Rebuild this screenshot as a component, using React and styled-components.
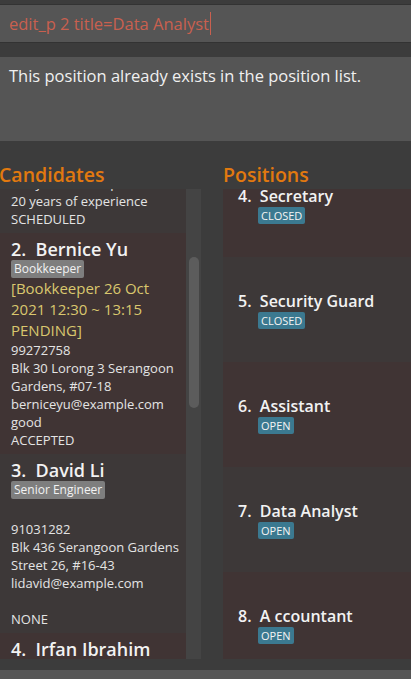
import React, { useLayoutEffect, useRef } from 'react';
import styled, { createGlobalStyle } from 'styled-components';

const GlobalStyle = createGlobalStyle`
  html, body {
    margin: 0;
    padding: 0;
    background: #3c3c3c;
    overflow: hidden;
  }
  body {
    font-family: "Open Sans", "Noto Sans", sans-serif;
  }
`;

const Page = styled.div`
  display: flex;
  flex-direction: column;
  height: 679px;
  overflow: hidden;
`;

const TopStrip = styled.div`
  height: 4px;
  flex-shrink: 0;
`;

const CommandBox = styled.div`
  height: 37px;
  flex-shrink: 0;
  display: flex;
  align-items: center;
  padding-left: 9px;
  background: #555555;
  border-top: 1px solid #333333;
  border-bottom: 1px solid #333333;
`;

const CommandText = styled.span`
  font-size: 16.5px;
  color: #c9604f;
  white-space: pre;
`;

const Caret = styled.span`
  width: 1px;
  height: 23px;
  margin-left: 1px;
  background: #c9604f;
`;

const ResultBox = styled.div`
  height: 84px;
  flex-shrink: 0;
  box-sizing: border-box;
  margin-top: 14px;
  padding: 8px 9px 0;
  background: #555555;
  color: #f0f0f0;
  font-size: 16.5px;
  line-height: 22px;
`;

const Panels = styled.div`
  display: flex;
  gap: 22px;
  height: 518px;
  flex-shrink: 0;
`;

const Column = styled.div`
  display: flex;
  flex-direction: column;
  width: ${(p) => (p.$width ? `${p.$width}px` : 'auto')};
  flex: ${(p) => (p.$width ? '0 0 auto' : '1')};
  min-width: 0;
`;

const Heading = styled.div`
  padding-top: 20px;
  height: 28px;
  margin-left: ${(p) => p.$shift || 0}px;
  font-size: 19.5px;
  line-height: 27px;
  font-weight: 600;
  color: #e2790f;
`;

const ListRow = styled.div`
  display: flex;
  height: 470px;
`;

const ListViewport = styled.div`
  flex: 1;
  height: 470px;
  overflow: hidden;
`;

const ScrollTrack = styled.div`
  width: 15px;
  background: #444444;
  padding-top: 68px;
  box-sizing: border-box;
`;

const ScrollThumb = styled.div`
  width: 10px;
  height: 151px;
  margin-left: 3px;
  border-radius: 5px;
  background: #5c5c5c;
`;

const CandidateCard = styled.div`
  padding: 5px 5px 5px 11px;
  background: ${(p) => (p.$alt ? '#403434' : '#3d3838')};
`;

const NameLine = styled.div`
  font-size: ${(p) => p.$size || 16}px;
  line-height: 22px;
  font-weight: 600;
  color: #f2f2f2;
  white-space: pre;
`;

const TagRow = styled.div`
  display: flex;
  gap: 4px;
  height: 18px;
`;

const Tag = styled.span`
  display: inline-block;
  height: 18px;
  padding: 0 3px;
  border-radius: 2px;
  background: #7e7e7e;
  color: #f2f2f2;
  font-size: 12px;
  line-height: 18px;
`;

const Interview = styled.div`
  min-height: 21px;
  font-size: 15px;
  line-height: 21px;
  color: #d9c76e;
`;

const Detail = styled.div`
  min-height: 18px;
  font-size: 13px;
  line-height: 18px;
  color: #e4e4e4;
`;

const PositionCard = styled.div`
  height: 105px;
  box-sizing: border-box;
  padding-left: 15px;
  display: flex;
  flex-direction: column;
  justify-content: center;
  background: ${(p) => (p.$alt ? '#403434' : '#3d3838')};
`;

const BadgeRow = styled.div`
  display: flex;
  margin-left: 20px;
  height: 17px;
`;

const Badge = styled.span`
  height: 17px;
  padding: 0 3px;
  border-radius: 2px;
  background: #3b7990;
  color: #f4f4f4;
  font-size: 11px;
  line-height: 17px;
`;

const StatusBar = styled.div`
  margin-top: 11px;
  height: 20px;
  flex-shrink: 0;
  background: #555555;
`;

const candidates = [
  {
    name: 'Alex Yeoh',
    tags: ['Software Engineer'],
    interview: '[Accountant 25 Oct 2021 10:00 ~ 10:45 SCHEDULED]',
    phone: '87438807',
    address: 'Blk 30 Geylang Street 29, #06-40',
    email: 'alexyeoh@example.com',
    remark: '20 years of experience',
    status: 'SCHEDULED',
  },
  {
    name: 'Bernice Yu',
    tags: ['Bookkeeper'],
    interview: '[Bookkeeper 26 Oct 2021 12:30 ~ 13:15 PENDING]',
    phone: '99272758',
    address: 'Blk 30 Lorong 3 Serangoon Gardens, #07-18',
    email: 'berniceyu@example.com',
    remark: 'good',
    status: 'ACCEPTED',
  },
  {
    name: 'David Li',
    tags: ['Senior Engineer'],
    interview: '',
    phone: '91031282',
    address: 'Blk 436 Serangoon Gardens Street 26, #16-43',
    email: 'lidavid@example.com',
    remark: '',
    status: 'NONE',
  },
  {
    name: 'Irfan Ibrahim',
    tags: ['Accountant'],
    interview: '',
    phone: '92492021',
    address: 'Blk 47 Tampines Street 20, #17-35',
    email: 'irfan@example.com',
    remark: '',
    status: 'NONE',
  },
];

const positions = [
  { title: 'Software Engineer', status: 'OPEN' },
  { title: 'Bookkeeper', status: 'OPEN' },
  { title: 'Senior Engineer', status: 'OPEN' },
  { title: 'Secretary', status: 'CLOSED' },
  { title: 'Security Guard', status: 'CLOSED' },
  { title: 'Assistant', status: 'OPEN' },
  { title: 'Data Analyst', status: 'OPEN' },
  { title: 'A ccountant', status: 'OPEN' },
];

const App = () => {
  const candidateView = useRef(null);
  const firstCard = useRef(null);
  const positionView = useRef(null);

  useLayoutEffect(() => {
    // keep the end of the first card 44px below the list top, as in the shot
    if (candidateView.current && firstCard.current) {
      candidateView.current.scrollTop = firstCard.current.offsetHeight - 44;
    }
    if (positionView.current) {
      positionView.current.scrollTop = 3 * 105 + 37;
    }
  }, []);

  return (
    <>
      <GlobalStyle />
      <Page>
        <TopStrip />
        <CommandBox>
          <CommandText>edit_p 2 title=Data Analyst</CommandText>
          <Caret />
        </CommandBox>
        <ResultBox>This position already exists in the position list.</ResultBox>
        <Panels>
          <Column $width={201}>
            <Heading $shift={-1}>Candidates</Heading>
            <ListRow>
              <ListViewport ref={candidateView}>
                {candidates.map((c, i) => (
                  <CandidateCard key={c.name} $alt={i % 2 === 1} ref={i === 0 ? firstCard : null}>
                    <NameLine $size={18}>{`${i + 1}.  ${c.name}`}</NameLine>
                    <TagRow>
                      {c.tags.map((t) => (
                        <Tag key={t}>{t}</Tag>
                      ))}
                    </TagRow>
                    <Interview>{c.interview}</Interview>
                    <Detail>{c.phone}</Detail>
                    <Detail>{c.address}</Detail>
                    <Detail>{c.email}</Detail>
                    <Detail>{c.remark}</Detail>
                    <Detail>{c.status}</Detail>
                  </CandidateCard>
                ))}
              </ListViewport>
              <ScrollTrack>
                <ScrollThumb />
              </ScrollTrack>
            </ListRow>
          </Column>
          <Column>
            <Heading>Positions</Heading>
            <ListViewport ref={positionView}>
              {positions.map((p, i) => (
                <PositionCard key={p.title} $alt={i % 2 === 1}>
                  <NameLine>{`${i + 1}.  ${p.title}`}</NameLine>
                  <BadgeRow>
                    <Badge>{p.status}</Badge>
                  </BadgeRow>
                </PositionCard>
              ))}
            </ListViewport>
          </Column>
        </Panels>
        <StatusBar />
      </Page>
    </>
  );
};

export default App;
